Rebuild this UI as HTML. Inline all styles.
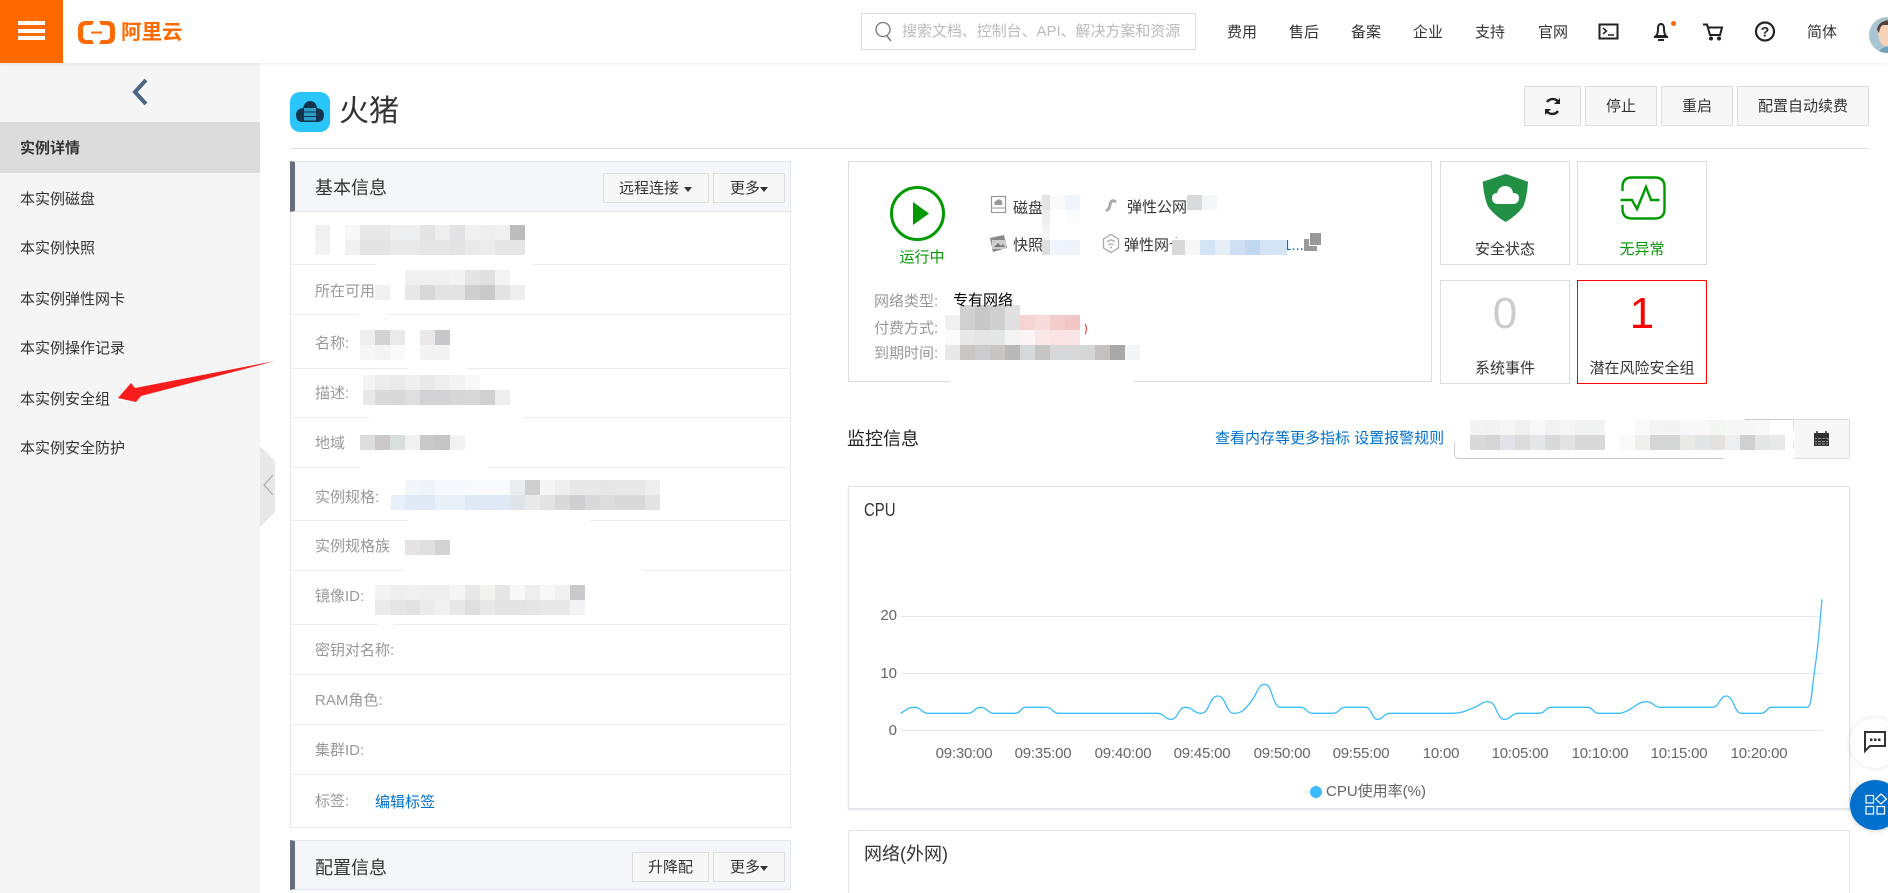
<!DOCTYPE html>
<html lang="zh-CN">
<head>
<meta charset="utf-8">
<title>阿里云</title>
<style>
html,body{margin:0;padding:0;background:#fff;width:1888px;height:893px;overflow:hidden}
#w{position:relative;width:1888px;height:893px;overflow:hidden;font-family:"Liberation Sans","Noto Sans CJK SC",sans-serif;font-size:15px;color:#333}
.t{position:absolute;white-space:nowrap;line-height:20px;height:20px}
.b{position:absolute;box-sizing:border-box}
.g{color:#999}
.a{color:#0070cc}
.c{text-align:center}
.k{color:#666;letter-spacing:-.2px}
.btn{position:absolute;box-sizing:border-box;border:1px solid #ddd;background:#f7f7f7;line-height:30px;text-align:center;color:#333;white-space:nowrap}
.line{position:absolute;left:290px;width:501px;height:1px;background:#ececec}
.tile{position:absolute;box-sizing:border-box;border:1px solid #ddd;width:130px;height:104px;background:#fff}
svg{position:absolute;overflow:visible}
.m rect.x{width:15px;height:15px}
</style>
</head>
<body>
<div id="w">
<!-- sidebar -->
<div class="b" style="left:0;top:63px;width:260px;height:830px;background:#f5f5f5"></div>
<div class="b" style="left:0;top:122px;width:260px;height:51px;background:#dcdcdc"></div>
<div class="t" style="left:20px;top:139px;font-weight:bold">实例详情</div>
<div class="t" style="left:20px;top:190px">本实例磁盘</div>
<div class="t" style="left:20px;top:239px">本实例快照</div>
<div class="t" style="left:20px;top:290px">本实例弹性网卡</div>
<div class="t" style="left:20px;top:339px">本实例操作记录</div>
<div class="t" style="left:20px;top:390px">本实例安全组</div>
<div class="t" style="left:20px;top:439px">本实例安全防护</div>
<svg style="left:0;top:0" width="300" height="540"><path d="M146 80L135 92L146 104" fill="none" stroke="#4a6785" stroke-width="4"/><path d="M260 446L275 461V512L260 527Z" fill="#e8e8e8"/><path d="M273 475L264 485L273 495" fill="none" stroke="#aaa" stroke-width="1.2"/></svg>

<!-- header -->
<div class="b" style="left:0;top:0;width:1888px;height:63px;background:#fff;box-shadow:0 1px 4px rgba(0,0,0,.08)"></div>
<div class="b" style="left:0;top:0;width:63px;height:63px;background:#ff6a00"></div>
<div class="b" style="left:18px;top:21px;width:27px;height:4px;background:#fff"></div>
<div class="b" style="left:18px;top:29px;width:27px;height:4px;background:#fff"></div>
<div class="b" style="left:18px;top:36px;width:27px;height:4px;background:#fff"></div>
<svg style="left:0;top:0" width="130" height="63"><path d="M94 21H86Q78 21 78 29V36Q78 44 86 44H94L92 40H87Q83 40 83 36V29Q83 25 87 25H92Z" fill="#ff6a00"/><path d="M99 21H107Q115 21 115 29V36Q115 44 107 44H99L101 40H106Q110 40 110 36V29Q110 25 106 25H101Z" fill="#ff6a00"/><path d="M91 32.500H102" stroke="#ff6a00" stroke-width="2"/></svg>
<div class="t" style="left:121px;top:23px;font-size:20.500px;color:#ff6a00;font-weight:bold">阿里云</div>

<div class="b" style="left:861px;top:13px;width:335px;height:37px;border:1px solid #ddd;background:#fff"></div>
<svg style="left:0;top:0" width="1888" height="63">
<circle cx="883" cy="29.500" r="7" fill="none" stroke="#777" stroke-width="1.300"/><path d="M887 36L891 41" stroke="#777" stroke-width="1.500"/>
<rect x="1599.500" y="24.500" width="18" height="14" fill="none" stroke="#222" stroke-width="2"/><path d="M1603 28L1606.500 31L1603 34M1608 35H1614" fill="none" stroke="#222" stroke-width="1.500"/>
<path d="M1656 36Q1658 34 1658 29Q1658 24 1661 24Q1664 24 1664 29Q1664 34 1666 36Z" fill="none" stroke="#222" stroke-width="2"/><path d="M1654 37H1668M1658 40H1664" stroke="#222" stroke-width="2"/><circle cx="1673.500" cy="23.500" r="2.500" fill="#ff6a00"/>
<path d="M1703 24.500H1707L1710 35H1720L1722 27.500H1708" fill="none" stroke="#222" stroke-width="2"/><circle cx="1711" cy="38.500" r="2" fill="#222"/><circle cx="1719" cy="38.500" r="2" fill="#222"/>
<circle cx="1765" cy="31.500" r="9" fill="none" stroke="#222" stroke-width="2.200"/>
<text x="1765" y="36.500" text-anchor="middle" font-size="14" font-weight="bold" fill="#222" font-family="Liberation Sans">?</text>
<clipPath id="av"><circle cx="1887" cy="35" r="18"/></clipPath>
<g clip-path="url(#av)"><rect x="1869" y="17" width="36" height="36" fill="#a9c5d3"/><path d="M1878 31Q1878 20 1892 20V46H1884Q1878 42 1878 31Z" fill="#f6d3b6"/><path d="M1877 30Q1878 20 1892 20V25H1883Q1880 26 1879 33Z" fill="#54423a"/><path d="M1878 53Q1880 47 1892 46V53Z" fill="#6fa0bd"/></g>
</svg>
<div class="t" style="left:902px;top:22px;color:#bbb;letter-spacing:-.05px">搜索文档、控制台、API、解决方案和资源</div>
<div class="t" style="left:1227px;top:23px">费用</div>
<div class="t" style="left:1289px;top:23px">售后</div>
<div class="t" style="left:1351px;top:23px">备案</div>
<div class="t" style="left:1413px;top:23px">企业</div>
<div class="t" style="left:1475px;top:23px">支持</div>
<div class="t" style="left:1538px;top:23px">官网</div>
<div class="t" style="left:1807px;top:23px">简体</div>

<!-- title -->
<svg style="left:0;top:0" width="340" height="140">
<rect x="290" y="92" width="40" height="40" rx="10" fill="#29c5fb"/>
<path d="M301 122Q296 121 296 115Q296 109 303 108Q305 101 310 101Q316 101 317 108Q324 109 324 115Q324 121 319 122Z" fill="#12344d"/>
<rect x="304" y="108" width="12" height="3.500" fill="#2f9dc9"/><rect x="304" y="112.500" width="12" height="3.500" fill="#2f9dc9"/><rect x="304" y="117" width="12" height="3.500" fill="#2f9dc9"/>
</svg>
<div class="t" style="left:339px;top:96px;font-size:30px;height:32px;line-height:32px">火猪</div>
<div class="btn" style="left:1524px;top:86px;width:57px;height:40px;line-height:38px"></div>
<svg style="left:1524px;top:86px" width="57" height="40"><path d="M35 17A7 7 0 0 0 23 16M22 24A7 7 0 0 0 34 25" fill="none" stroke="#222" stroke-width="2.400"/><path d="M36 12V18H30Z M21 29V23H27Z" fill="#222"/></svg>
<div class="btn" style="left:1585px;top:86px;width:72px;height:40px;line-height:40px">停止</div>
<div class="btn" style="left:1661px;top:86px;width:72px;height:40px;line-height:40px">重启</div>
<div class="btn" style="left:1737px;top:86px;width:132px;height:40px;line-height:40px">配置自动续费</div>
<div class="b" style="left:290px;top:148px;width:1579px;height:1px;background:#e0e0e0"></div>

<!-- basic panel -->
<div class="b" style="left:290px;top:161px;width:501px;height:667px;border:1px solid #e8e8e8;background:#fff"></div>
<div class="b" style="left:290px;top:161px;width:501px;height:51px;background:#f4f6f9;border:1px solid #e3e6ec;border-left:5px solid #656f7d"></div>
<div class="t" style="left:315px;top:177px;font-size:18px;height:22px;line-height:22px">基本信息</div>
<div class="btn" style="left:603px;top:173px;width:106px;height:30px;text-align:left;padding-left:15px">远程连接</div>
<div class="btn" style="left:713px;top:173px;width:72px;height:30px;text-align:left;padding-left:16px">更多</div>
<svg style="left:0;top:0" width="800" height="893"><path d="M684 187H692L688 192ZM760 187H768L764 192Z" fill="#333"/></svg>
<div class="line" style="top:264px"></div>
<div class="line" style="top:314px"></div>
<div class="line" style="top:368px"></div>
<div class="line" style="top:417px"></div>
<div class="line" style="top:467px"></div>
<div class="line" style="top:520px"></div>
<div class="line" style="top:570px"></div>
<div class="line" style="top:624px"></div>
<div class="line" style="top:674px"></div>
<div class="line" style="top:724px"></div>
<div class="line" style="top:774px"></div>
<div class="t g" style="left:315px;top:282px">所在可用区:</div>
<div class="t g" style="left:315px;top:334px">名称:</div>
<div class="t g" style="left:315px;top:384px">描述:</div>
<div class="t g" style="left:315px;top:434px">地域</div>
<div class="t g" style="left:315px;top:488px">实例规格:</div>
<div class="t g" style="left:315px;top:537px">实例规格族</div>
<div class="t g" style="left:315px;top:587px">镜像ID:</div>
<div class="t g" style="left:315px;top:641px">密钥对名称:</div>
<div class="t g" style="left:315px;top:691px">RAM角色:</div>
<div class="t g" style="left:315px;top:741px">集群ID:</div>
<div class="t g" style="left:315px;top:792px">标签:</div>
<div class="t a" style="left:375px;top:793px">编辑标签</div>

<!-- config panel -->
<div class="b" style="left:290px;top:840px;width:501px;height:50px;background:#f4f6f9;border:1px solid #e3e6ec;border-left:5px solid #656f7d"></div>
<div class="t" style="left:315px;top:857px;font-size:18px;height:22px;line-height:22px">配置信息</div>
<div class="btn" style="left:632px;top:852px;width:77px;height:30px">升降配</div>
<div class="btn" style="left:713px;top:852px;width:72px;height:30px;text-align:left;padding-left:16px">更多</div>
<svg style="left:0;top:0" width="800" height="893"><path d="M760 866H768L764 871Z" fill="#333"/></svg>

<!-- status panel -->
<div class="b" style="left:848px;top:161px;width:584px;height:221px;border:1px solid #ddd"></div>
<svg style="left:0;top:0" width="1888" height="400">
<circle cx="917.500" cy="213.500" r="26" fill="none" stroke="#090" stroke-width="3"/><path d="M913 202L929 213.500L913 225Z" fill="#090"/>
<rect x="991.500" y="196.500" width="14" height="16" fill="none" stroke="#999" stroke-width="1.200"/><path d="M991 208H1006" stroke="#999"/><path d="M995 205Q993 202 996 201Q998 198 1001 200Q1003 201 1002 205Z" fill="#999"/>
<path d="M1116 202Q1112 199 1110.500 203L1109.500 207Q1108 211 1106 209.500" fill="none" stroke="#aaa" stroke-width="3"/>
<path d="M990 238L1004 235L1007 248L993 252Z" fill="#888"/><path d="M992 240H1006V249H992Z" fill="#ccc"/><path d="M994 247L998 243L1001 246L1003 244L1005 247Z" fill="#777"/>
<path d="M1111 234.500L1118.500 239V248L1111 252.500L1103.500 248V239Z" fill="none" stroke="#aaa" stroke-width="1.300"/><path d="M1107 242Q1111 238 1115 242M1108.500 245Q1111 243 1113.500 245" fill="none" stroke="#aaa" stroke-width="1.200"/><circle cx="1111" cy="247.500" r="1" fill="#aaa"/>
<path d="M1310 233H1321V245H1310Z" fill="#999"/><path d="M1304 239H1309V246H1317V251H1304Z" fill="#999"/>
</svg>
<div class="t c" style="left:890px;top:248px;width:64px;color:#090">运行中</div>
<div class="t" style="left:1013px;top:199px">磁盘</div>
<div class="t" style="left:1013px;top:236px">快照</div>
<div class="t" style="left:1127px;top:198px">弹性公网</div>
<div class="t" style="left:1124px;top:236px">弹性网卡</div>
<div class="t a" style="left:1283px;top:236px">1...</div>
<div class="t g" style="left:874px;top:292px">网络类型:</div>
<div class="t g" style="left:874px;top:319px">付费方式:</div>
<div class="t" style="left:1083px;top:319px;color:#e55">)</div>
<div class="t g" style="left:874px;top:344px">到期时间:</div>

<!-- tiles -->
<div class="tile" style="left:1440px;top:161px"></div>
<div class="tile" style="left:1577px;top:161px"></div>
<div class="tile" style="left:1440px;top:280px"></div>
<div class="tile" style="left:1577px;top:280px;border-color:#f00"></div>
<svg style="left:0;top:0" width="1888" height="300">
<path d="M1505.700 174L1528 181.700Q1527 198 1523 207Q1516 216 1505.700 222Q1495 216 1488.300 207Q1484 198 1482.700 181.700Z" fill="#229044"/>
<path d="M1497 204Q1492 203 1492 198Q1492 193 1497 193Q1499 186 1505 186Q1512 186 1513 193Q1519 193 1519 198Q1519 203 1514 204Z" fill="#fff"/>
<path d="M1622.500 191V187Q1622.500 177.500 1632 177.500H1655Q1664.500 177.500 1664.500 187V209Q1664.500 218.500 1655 218.500H1632Q1622.500 218.500 1622.500 209V205" fill="none" stroke="#090" stroke-width="2.400"/>
<path d="M1620.500 200H1632L1637 209L1646 187L1651 200H1659.500" fill="none" stroke="#090" stroke-width="2.400"/>
</svg>
<div class="t c" style="left:1440px;top:240px;width:130px">安全状态</div>
<div class="t c" style="left:1577px;top:240px;width:130px;color:#090">无异常</div>
<div class="t c" style="left:1440px;top:289px;width:130px;font-size:44px;height:50px;line-height:50px;color:#ccc">0</div>
<div class="t c" style="left:1577px;top:289px;width:130px;font-size:44px;height:50px;line-height:50px;color:#f00">1</div>
<div class="t c" style="left:1440px;top:359px;width:130px">系统事件</div>
<div class="t c" style="left:1577px;top:359px;width:130px">潜在风险安全组</div>

<!-- monitor -->
<div class="t" style="left:847px;top:428px;font-size:18px;height:22px;line-height:22px;color:#222">监控信息</div>
<div class="t a" style="left:1215px;top:429px">查看内存等更多指标 设置报警规则</div>
<div class="b" style="left:1454px;top:419px;width:396px;height:40px;border:1px solid #ccc;border-radius:0 0 0 5px"></div>
<div class="b" style="left:1793px;top:419px;width:57px;height:40px;border:1px solid #ddd;background:#f7f7f7"></div>
<svg style="left:0;top:0" width="1888" height="460"><rect x="1814" y="433" width="15" height="13" fill="#333"/><path d="M1817 431V434M1826 431V434" stroke="#333" stroke-width="1.500"/><path d="M1815 438.500H1828V440M1815 441.500H1828M1815 444H1828" stroke="#bbb" stroke-width=".8"/><path d="M1817.500 437V446M1821.500 437V446M1825.500 437V446" stroke="#333" stroke-width="1"/></svg>

<!-- CPU panel -->
<div class="b" style="left:848px;top:486px;width:1002px;height:323px;border:1px solid #dfe3ea;box-shadow:0 1px 2px rgba(0,0,0,.12)"></div>
<div class="t" style="left:864px;top:500px;font-size:18px;transform:scaleX(.83);transform-origin:0 50%">CPU</div>
<div class="b" style="left:901px;top:616px;width:921px;height:1px;background:#e4e6ea"></div>
<div class="b" style="left:901px;top:673px;width:921px;height:1px;background:#e4e6ea"></div>
<div class="b" style="left:901px;top:730px;width:921px;height:1px;background:#e4e6ea"></div>
<div class="t" style="left:880px;top:606px;color:#666;width:17px;text-align:right">20</div>
<div class="t" style="left:880px;top:664px;color:#666;width:17px;text-align:right">10</div>
<div class="t" style="left:880px;top:721px;color:#666;width:17px;text-align:right">0</div>
<svg style="left:800px;top:440px" width="1088" height="453" viewBox="0 0 1568 1359" preserveAspectRatio="none"><path vector-effect="non-scaling-stroke" fill="none" stroke="#3bbcff" stroke-width="1.300" d="M145 820C155 808 155 802 165 802C175 802 175 820 185 820L242 820C251 820 251 802 260 802C270 802 270 820 280 820L310 820C318 820 318 802 325 802L355 802C364 802 364 820 372 820L515 820C525 820 525 838 535 838C545 838 545 802 555 802C567 802 567 820 578 820C590 820 590 768 602 768C614 768 614 820 625 820C638 820 642 805 650 785C658 765 660 733 670 733C681 733 681 802 692 802L722 802C730 802 730 820 738 820L768 820C777 820 777 802 785 802L815 802C824 802 824 838 832 838C841 838 841 820 850 820L940 820C955 820 962 810 972 802C982 795 982 785 992 785C1004 785 1004 838 1015 838C1025 838 1025 820 1035 820L1065 820C1074 820 1074 802 1082 802L1135 802C1143 802 1143 820 1150 820L1182 820C1200 812 1205 785 1220 785C1230 785 1230 802 1240 802L1315 802C1325 802 1325 768 1335 768C1346 768 1346 820 1357 820L1385 820C1393 820 1393 802 1400 802L1452 802C1458 800 1458 750 1463 680C1468 610 1470 540 1473 478"/></svg>
<div class="t c k" style="left:924px;top:744px;width:80px">09:30:00</div>
<div class="t c k" style="left:1003px;top:744px;width:80px">09:35:00</div>
<div class="t c k" style="left:1083px;top:744px;width:80px">09:40:00</div>
<div class="t c k" style="left:1162px;top:744px;width:80px">09:45:00</div>
<div class="t c k" style="left:1242px;top:744px;width:80px">09:50:00</div>
<div class="t c k" style="left:1321px;top:744px;width:80px">09:55:00</div>
<div class="t c k" style="left:1401px;top:744px;width:80px">10:00</div>
<div class="t c k" style="left:1480px;top:744px;width:80px">10:05:00</div>
<div class="t c k" style="left:1560px;top:744px;width:80px">10:10:00</div>
<div class="t c k" style="left:1639px;top:744px;width:80px">10:15:00</div>
<div class="t c k" style="left:1719px;top:744px;width:80px">10:20:00</div>
<div class="b" style="left:1310px;top:786px;width:12px;height:12px;border-radius:50%;background:#3bbcff"></div>
<div class="t" style="left:1326px;top:782px;color:#666">CPU使用率(%)</div>

<!-- network panel -->
<div class="b" style="left:848px;top:830px;width:1002px;height:80px;border:1px solid #dfe3ea"></div>
<div class="t" style="left:864px;top:843px;font-size:18px;height:22px;line-height:22px">网络(外网)</div>

<!-- floats -->
<div class="b" style="left:1850px;top:718px;width:50px;height:50px;border-radius:50%;background:#fff;box-shadow:0 0 6px rgba(0,0,0,.12)"></div>
<div class="b" style="left:1850px;top:780px;width:50px;height:50px;border-radius:50%;background:#0070cc;box-shadow:0 1px 6px rgba(0,0,0,.15)"></div>
<svg style="left:0;top:0" width="1888" height="893">
<path d="M1865 732H1885V746H1870L1865 751Z" fill="none" stroke="#333" stroke-width="2"/><path d="M1870 738.500h2.500v2.500h-2.500zM1874 738.500h2.500v2.500h-2.500zM1878 738.500h2.500v2.500h-2.500z" fill="#333"/>
<g fill="none" stroke="#fff" stroke-width="1.200"><rect x="1866" y="795.500" width="7.500" height="7.500"/><rect x="1866" y="806.500" width="7.500" height="7.500"/><rect x="1877" y="806.500" width="7.500" height="7.500"/><path d="M1881 794L1886.500 799L1881 804L1875.500 799Z"/></g>
</svg>

<!-- arrow + redaction overlay -->
<svg style="left:0;top:0" width="1888" height="893"><path d="M118 398L131 383L135 388L275 361L141 396L136 402Z" fill="#f91c1c"/></svg>
<svg class="m" style="left:0;top:0" width="1888" height="893" shape-rendering="crispEdges">
<g fill="#fff" shape-rendering="auto">
<rect x="320" y="214" width="235" height="46" rx="20"/><rect x="373" y="255" width="162" height="50" rx="20"/><rect x="358" y="305" width="30" height="25" rx="12"/><rect x="358" y="328" width="100" height="35" rx="14"/><rect x="408" y="355" width="58" height="22" rx="10"/><rect x="360" y="372" width="172" height="48" rx="18"/><rect x="358" y="430" width="132" height="48" rx="18"/><rect x="390" y="477" width="295" height="36" rx="16"/><rect x="408" y="510" width="182" height="20" rx="10"/><rect x="403" y="562" width="240" height="26" rx="12"/><rect x="373" y="582" width="217" height="36" rx="14"/><rect x="378" y="612" width="15" height="20" rx="7"/>
<rect x="1042" y="195" width="38" height="60"/><rect x="1187" y="193" width="45" height="30" rx="14"/><rect x="1190" y="210" width="24" height="30" rx="10"/><rect x="944" y="307" width="141" height="43" rx="14"/><rect x="944" y="345" width="196" height="42" rx="20"/><rect x="950" y="372" width="160" height="18" rx="9"/><rect x="1172" y="238" width="115" height="18"/>
<rect x="1450" y="412" width="297" height="35" rx="16"/><rect x="1460" y="420" width="335" height="32" rx="14"/><rect x="1723" y="445" width="72" height="18" rx="8"/>
</g>
<rect class="x" x="315" y="225" fill="#f0f0f0"/><rect class="x" x="345" y="225" fill="#f8f8f8"/><rect class="x" x="360" y="225" fill="#e8e8e8"/><rect class="x" x="375" y="225" fill="#e8e8e8"/><rect class="x" x="390" y="225" fill="#eee"/><rect class="x" x="405" y="225" fill="#eceef0"/><rect class="x" x="420" y="225" fill="#e5e3e3"/><rect class="x" x="435" y="225" fill="#eee"/><rect class="x" x="450" y="225" fill="#e2e2e4"/><rect class="x" x="465" y="225" fill="#f0f0f0"/><rect class="x" x="480" y="225" fill="#eee"/><rect class="x" x="495" y="225" fill="#f0f0f0"/><rect class="x" x="510" y="225" fill="#bcbcbc"/>
<rect class="x" x="315" y="240" fill="#f2f2f2"/><rect class="x" x="345" y="240" fill="#f0f0f0"/><rect class="x" x="360" y="240" fill="#e4e4e4"/><rect class="x" x="375" y="240" fill="#e4e4e4"/><rect class="x" x="390" y="240" fill="#e9e9e9"/><rect class="x" x="405" y="240" fill="#e9e9e9"/><rect class="x" x="420" y="240" fill="#e5e5e5"/><rect class="x" x="435" y="240" fill="#e5e5e5"/><rect class="x" x="450" y="240" fill="#e3e3e3"/><rect class="x" x="465" y="240" fill="#e9e9e9"/><rect class="x" x="480" y="240" fill="#ececec"/><rect class="x" x="495" y="240" fill="#e6e6e6"/><rect class="x" x="510" y="240" fill="#e6e6e6"/>
<rect class="x" x="405" y="270" fill="#f0f0f0"/><rect class="x" x="420" y="270" fill="#f0f0f0"/><rect class="x" x="435" y="270" fill="#f0f0f0"/><rect class="x" x="450" y="270" fill="#f3f3f3"/><rect class="x" x="465" y="270" fill="#e4e4e4"/><rect class="x" x="480" y="270" fill="#e0e0e0"/><rect class="x" x="495" y="270" fill="#f4f4f4"/>
<rect class="x" x="375" y="285" fill="#f0f0f0"/><rect class="x" x="405" y="285" fill="#e8e8e8"/><rect class="x" x="420" y="285" fill="#d8d8d8"/><rect class="x" x="435" y="285" fill="#e3e3e3"/><rect class="x" x="450" y="285" fill="#e3e3e3"/><rect class="x" x="465" y="285" fill="#cfcfcf"/><rect class="x" x="480" y="285" fill="#c9c9c9"/><rect class="x" x="495" y="285" fill="#e3e3e3"/><rect class="x" x="510" y="285" fill="#eee"/>
<rect class="x" x="360" y="330" fill="#eee"/><rect class="x" x="375" y="330" fill="#d5d2d2"/><rect class="x" x="390" y="330" fill="#e9eaec"/><rect class="x" x="420" y="330" fill="#eae8e8"/><rect class="x" x="435" y="330" fill="#c8c8ca"/>
<rect class="x" x="360" y="345" fill="#f6f6f6"/><rect class="x" x="375" y="345" fill="#f4f4f4"/><rect class="x" x="390" y="345" fill="#fafafa"/><rect class="x" x="420" y="345" fill="#f3f3f3"/><rect class="x" x="435" y="345" fill="#f3f3f3"/>
<rect class="x" x="363" y="375" fill="#f4f4f4"/><rect class="x" x="375" y="375" fill="#ececec"/><rect class="x" x="390" y="375" fill="#eaeaea"/><rect class="x" x="405" y="375" fill="#efefef"/><rect class="x" x="420" y="375" fill="#e9e9e9"/><rect class="x" x="435" y="375" fill="#eee"/><rect class="x" x="450" y="375" fill="#f3f3f3"/><rect class="x" x="465" y="375" fill="#f8f8f8"/>
<rect class="x" x="363" y="390" fill="#e8e8e8"/><rect class="x" x="375" y="390" fill="#d9d9d9"/><rect class="x" x="390" y="390" fill="#d8d8d8"/><rect class="x" x="405" y="390" fill="#dedede"/><rect class="x" x="420" y="390" fill="#d2d2d4"/><rect class="x" x="435" y="390" fill="#d2d2d4"/><rect class="x" x="450" y="390" fill="#d6d6d6"/><rect class="x" x="465" y="390" fill="#d8d8d8"/><rect class="x" x="480" y="390" fill="#d0d0d0"/><rect class="x" x="495" y="390" fill="#efefef"/>
<rect class="x" x="360" y="435" fill="#ddd"/><rect class="x" x="375" y="435" fill="#cdc8c8"/><rect class="x" x="390" y="435" fill="#d9dede"/><rect class="x" x="405" y="435" fill="#f0f0f0"/><rect class="x" x="420" y="435" fill="#c9c9c9"/><rect class="x" x="435" y="435" fill="#c5c5c5"/><rect class="x" x="450" y="435" fill="#f2f2f2"/>
<rect class="x" x="405" y="480" fill="#f2f6fb"/><rect class="x" x="420" y="480" fill="#eef4fa"/><rect class="x" x="435" y="480" fill="#f5f8fc"/><rect class="x" x="450" y="480" fill="#f5f8fc"/><rect class="x" x="465" y="480" fill="#f8f9fc"/><rect class="x" x="480" y="480" fill="#f8f9fc"/><rect class="x" x="495" y="480" fill="#f8f9fc"/><rect class="x" x="510" y="480" fill="#e9edf0"/><rect class="x" x="525" y="480" fill="#cfcfcf"/><rect class="x" x="540" y="480" fill="#f5f5f5"/><rect class="x" x="555" y="480" fill="#eee"/><rect class="x" x="570" y="480" fill="#e8e8e8"/><rect class="x" x="585" y="480" fill="#e8e8e8"/><rect class="x" x="600" y="480" fill="#e6e6e6"/><rect class="x" x="615" y="480" fill="#e8e8e8"/><rect class="x" x="630" y="480" fill="#e8e8e8"/><rect class="x" x="645" y="480" fill="#eee"/>
<rect class="x" x="391" y="495" fill="#e6effa"/><rect class="x" x="405" y="495" fill="#e0eaf6"/><rect class="x" x="420" y="495" fill="#e0eaf6"/><rect class="x" x="435" y="495" fill="#eaf0f8"/><rect class="x" x="450" y="495" fill="#eaf0f8"/><rect class="x" x="465" y="495" fill="#dfe8f5"/><rect class="x" x="480" y="495" fill="#dfe8f5"/><rect class="x" x="495" y="495" fill="#dfe8f5"/><rect class="x" x="510" y="495" fill="#dfe3ea"/><rect class="x" x="525" y="495" fill="#e9e9e9"/><rect class="x" x="540" y="495" fill="#e3e3e3"/><rect class="x" x="555" y="495" fill="#d9d9d9"/><rect class="x" x="570" y="495" fill="#cfcfd2"/><rect class="x" x="585" y="495" fill="#d9d9d9"/><rect class="x" x="600" y="495" fill="#dddddb"/><rect class="x" x="615" y="495" fill="#d9d9d9"/><rect class="x" x="630" y="495" fill="#d9d9d9"/><rect class="x" x="645" y="495" fill="#e3e3e3"/>
<rect class="x" x="405" y="540" fill="#e5e3e3"/><rect class="x" x="420" y="540" fill="#dfdfdf"/><rect class="x" x="435" y="540" fill="#d3d3d3"/>
<rect class="x" x="375" y="585" fill="#f3f3f3"/><rect class="x" x="390" y="585" fill="#efefef"/><rect class="x" x="405" y="585" fill="#f0f0f0"/><rect class="x" x="420" y="585" fill="#efefef"/><rect class="x" x="435" y="585" fill="#efefef"/><rect class="x" x="450" y="585" fill="#f5f5f5"/><rect class="x" x="465" y="585" fill="#e8e8e8"/><rect class="x" x="480" y="585" fill="#f2f2f0"/><rect class="x" x="495" y="585" fill="#e6e6e6"/><rect class="x" x="510" y="585" fill="#f8f8f8"/><rect class="x" x="525" y="585" fill="#eee"/><rect class="x" x="540" y="585" fill="#f8f8f8"/><rect class="x" x="555" y="585" fill="#f0f0f0"/><rect class="x" x="570" y="585" fill="#c9c9cb"/>
<rect class="x" x="375" y="600" fill="#ebebeb"/><rect class="x" x="390" y="600" fill="#e5e5e5"/><rect class="x" x="405" y="600" fill="#e2e2e2"/><rect class="x" x="420" y="600" fill="#ebebeb"/><rect class="x" x="435" y="600" fill="#f0f0f0"/><rect class="x" x="450" y="600" fill="#e8e8e8"/><rect class="x" x="465" y="600" fill="#dedede"/><rect class="x" x="480" y="600" fill="#e8e8e8"/><rect class="x" x="495" y="600" fill="#e3e3e3"/><rect class="x" x="510" y="600" fill="#e3e3e3"/><rect class="x" x="525" y="600" fill="#e5e5e5"/><rect class="x" x="540" y="600" fill="#e8e8e8"/><rect class="x" x="555" y="600" fill="#e8e8e8"/><rect class="x" x="570" y="600" fill="#f3f3f5"/>
<rect class="x" x="1042" y="195" fill="#e3e3e3" style="width:8px"/><rect class="x" x="1042" y="210" fill="#eee" style="width:8px"/><rect class="x" x="1042" y="225" fill="#f5f5f5" style="width:8px"/><rect class="x" x="1042" y="240" fill="#dfdfdf" style="width:8px"/><rect class="x" x="1050" y="195" fill="#fafafa"/><rect class="x" x="1065" y="195" fill="#f0f5fd"/><rect class="x" x="1065" y="210" fill="#fbfcfe"/><rect class="x" x="1050" y="240" fill="#f0f4fc"/><rect class="x" x="1065" y="240" fill="#eff4fb"/>
<rect class="x" x="1187" y="195" fill="#d8dadc"/><rect class="x" x="1202" y="195" fill="#f5f6f7"/>
<rect class="x" x="1172" y="240" fill="#d8d8d8" style="width:13px"/><rect class="x" x="1185" y="240" fill="#f7f7f7"/><rect class="x" x="1200" y="240" fill="#d5e4f5"/><rect class="x" x="1215" y="240" fill="#e5edf7"/><rect class="x" x="1230" y="240" fill="#d0e0f3"/><rect class="x" x="1245" y="240" fill="#c2d8f0"/><rect class="x" x="1260" y="240" fill="#d4e3f5" style="width:27px"/>
<rect class="x" x="960" y="305" fill="#d0d0d0" style="height:10px"/><rect class="x" x="975" y="305" fill="#c8c8c8" style="height:10px"/><rect class="x" x="990" y="305" fill="#cfcfcf" style="height:10px"/><rect class="x" x="1005" y="305" fill="#e0e0e0" style="height:10px"/>
<rect class="x" x="945" y="315" fill="#f0f0f0"/><rect class="x" x="960" y="315" fill="#d0d0d0"/><rect class="x" x="975" y="315" fill="#c8c8c8"/><rect class="x" x="990" y="315" fill="#cfcfcf"/><rect class="x" x="1005" y="315" fill="#e0e0e0"/><rect class="x" x="1020" y="315" fill="#f6d4d4"/><rect class="x" x="1035" y="315" fill="#f8dcdc"/><rect class="x" x="1050" y="315" fill="#f3cccc"/><rect class="x" x="1065" y="315" fill="#f3c6c6"/>
<rect class="x" x="945" y="330" fill="#fbfbfb"/><rect class="x" x="960" y="330" fill="#e8e8e8"/><rect class="x" x="975" y="330" fill="#e5e5e5"/><rect class="x" x="990" y="330" fill="#e5e6e6"/><rect class="x" x="1005" y="330" fill="#f4f4f4"/><rect class="x" x="1020" y="330" fill="#fdf5f5"/><rect class="x" x="1035" y="330" fill="#fae8e8"/><rect class="x" x="1050" y="330" fill="#f9e3e3"/><rect class="x" x="1065" y="330" fill="#f9e5e5"/>
<rect class="x" x="945" y="345" fill="#e8e8e8"/><rect class="x" x="960" y="345" fill="#c9c7c5"/><rect class="x" x="975" y="345" fill="#cccccf"/><rect class="x" x="990" y="345" fill="#c8c5c3"/><rect class="x" x="1005" y="345" fill="#b9b9b9"/><rect class="x" x="1020" y="345" fill="#d5d9db"/><rect class="x" x="1035" y="345" fill="#c5c5c3"/><rect class="x" x="1050" y="345" fill="#d7d8da"/><rect class="x" x="1065" y="345" fill="#d8d8d8"/><rect class="x" x="1080" y="345" fill="#d4d6d8"/><rect class="x" x="1095" y="345" fill="#c5c0be"/><rect class="x" x="1110" y="345" fill="#a8a8a8"/><rect class="x" x="1125" y="345" fill="#f3f6f9"/>
<rect class="x" x="1470" y="420" fill="#f3f3f3"/><rect class="x" x="1485" y="420" fill="#f2f2f2"/><rect class="x" x="1500" y="420" fill="#f6f6f6"/><rect class="x" x="1515" y="420" fill="#f0f0f0"/><rect class="x" x="1530" y="420" fill="#f8f8f8"/><rect class="x" x="1545" y="420" fill="#f1f3f3"/><rect class="x" x="1560" y="420" fill="#f6f6f6"/><rect class="x" x="1575" y="420" fill="#f1f2f2"/><rect class="x" x="1590" y="420" fill="#f1f2f2"/><rect class="x" x="1635" y="420" fill="#f9f9f9"/><rect class="x" x="1650" y="420" fill="#f4f4f4"/><rect class="x" x="1665" y="420" fill="#f3f3f3"/><rect class="x" x="1680" y="420" fill="#f8f8f8"/><rect class="x" x="1695" y="420" fill="#f8f8f8"/><rect class="x" x="1710" y="420" fill="#f4f6f4"/><rect class="x" x="1725" y="420" fill="#f7f7f7"/><rect class="x" x="1740" y="420" fill="#f7f7f7"/><rect class="x" x="1755" y="420" fill="#f8f8f8"/>
<rect class="x" x="1470" y="435" fill="#d9d9d9"/><rect class="x" x="1485" y="435" fill="#d5d5d5"/><rect class="x" x="1500" y="435" fill="#e2e3e8"/><rect class="x" x="1515" y="435" fill="#dcdbd9"/><rect class="x" x="1530" y="435" fill="#e5e6ea"/><rect class="x" x="1545" y="435" fill="#d9d9d9"/><rect class="x" x="1560" y="435" fill="#e3e3e1"/><rect class="x" x="1575" y="435" fill="#d9d9d9"/><rect class="x" x="1590" y="435" fill="#d9d9d9"/><rect class="x" x="1620" y="435" fill="#f9f9f9"/><rect class="x" x="1635" y="435" fill="#efefed"/><rect class="x" x="1650" y="435" fill="#d5d5d5"/><rect class="x" x="1665" y="435" fill="#d4d6d5"/><rect class="x" x="1680" y="435" fill="#e9e9e5"/><rect class="x" x="1695" y="435" fill="#e1e5e6"/><rect class="x" x="1710" y="435" fill="#e3e2df"/><rect class="x" x="1725" y="435" fill="#eceeef"/><rect class="x" x="1740" y="435" fill="#d0d0d0"/><rect class="x" x="1755" y="435" fill="#e4e6e6"/><rect class="x" x="1770" y="435" fill="#e9e9e9"/>
</svg>
<div class="t" style="left:953px;top:291px;color:#000">专有网络</div>
</div>
</body>
</html>
